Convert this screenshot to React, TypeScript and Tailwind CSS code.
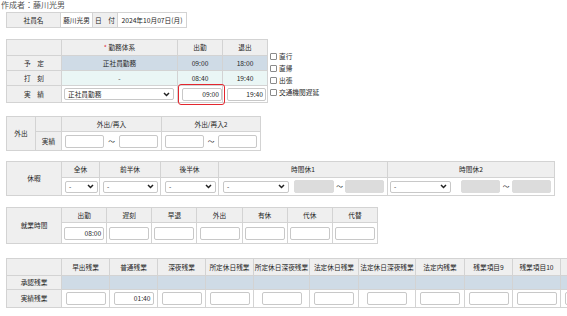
import React from 'react';

const cell = 'border border-[#d3d3d3] p-0 text-center align-middle whitespace-nowrap';
const head = 'border border-[#d3d3d3] p-0 text-center align-middle whitespace-nowrap bg-[#efefef] font-normal';

function Chevron() {
  return (
    <svg width="7" height="5" viewBox="0 0 7 5" className="shrink-0">
      <path d="M1 1 L3.5 3.5 L6 1" fill="none" stroke="#222" strokeWidth="1.5" />
    </svg>
  );
}

function Select({ w, value = '-' }: { w: string; value?: string }) {
  return (
    <div
      className={`${w} flex h-[12px] items-center justify-between rounded-[2px] border border-[#c8c8c8] bg-white pl-[3px] pr-[3px] text-left`}
    >
      <span className="leading-none">{value}</span>
      <Chevron />
    </div>
  );
}

function Field({ w, value = '', gray = false }: { w: string; value?: string; gray?: boolean }) {
  return (
    <div
      className={`${w} h-[13px] rounded-[2px] border pr-[2px] text-right leading-[11px] ${
        gray ? 'border-[#dcdcdc] bg-[#dcdcdc]' : 'border-[#c8c8c8] bg-white'
      }`}
    >
      {value}
    </div>
  );
}

function Check({ label }: { label: string }) {
  return (
    <div className="flex h-[12px] items-center gap-[2px]">
      <span className="h-[7px] w-[7px] rounded-[1px] border border-[#8a8a8a] bg-white" />
      <span>{label}</span>
    </div>
  );
}

const zangyo = [
  { label: '早出残業', w: 'w-[48px]', value: '' },
  { label: '普通残業', w: 'w-[48px]', value: '01:40' },
  { label: '深夜残業', w: 'w-[48px]', value: '' },
  { label: '所定休日残業', w: 'w-[48px]', value: '' },
  { label: '所定休日深夜残業', w: 'w-[56px]', value: '' },
  { label: '法定休日残業', w: 'w-[49px]', value: '' },
  { label: '法定休日深夜残業', w: 'w-[57px]', value: '' },
  { label: '法定内残業', w: 'w-[49px]', value: '' },
  { label: '残業項目9', w: 'w-[48px]', value: '' },
  { label: '残業項目10', w: 'w-[48px]', value: '' },
  { label: '残業項目11', w: 'w-[48px]', value: '' },
];

const shugyo = ['出勤', '遅刻', '早退', '外出', '有休', '代休', '代替'];

export default function App() {
  return (
    <div className="h-[316px] w-[567px] overflow-hidden bg-white font-['Noto_Sans_CJK_JP',sans-serif] text-[6.7px] leading-[9px] text-[#262626]">
      <div className="h-[10px] pl-[1px] text-[8px] leading-[9px] text-[#555]">作成者：藤川光男</div>

      {/* 社員 */}
      <div className="mt-[2px] pl-[6px]">
        <table className="w-[180px] table-fixed border-collapse">
          <colgroup>
            <col className="w-[54px]" />
            <col className="w-[32px]" />
            <col className="w-[25px]" />
            <col className="w-[69px]" />
          </colgroup>
          <tbody>
            <tr className="h-[15px]">
              <td className={head}>社員名</td>
              <td className={cell}>藤川光男</td>
              <td className={head}>日　付</td>
              <td className={cell}>2024年10月07日(月)</td>
            </tr>
          </tbody>
        </table>
      </div>

      {/* 勤務 */}
      <div className="mt-[11px] flex items-start pl-[6px]">
        <table className="w-[261px] table-fixed border-collapse">
          <colgroup>
            <col className="w-[55px]" />
            <col className="w-[116px]" />
            <col className="w-[45px]" />
            <col className="w-[45px]" />
          </colgroup>
          <tbody>
            <tr className="h-[16px]">
              <td className={head} />
              <td className={head}>
                <span className="text-[#e0262b]">*</span> 勤務体系
              </td>
              <td className={head}>出勤</td>
              <td className={head}>退出</td>
            </tr>
            <tr className="h-[15px]">
              <td className={head}>予　定</td>
              <td className={`${cell} bg-[#cfdbe6]`}>正社員勤務</td>
              <td className={`${cell} bg-[#cfdbe6]`}>09:00</td>
              <td className={`${cell} bg-[#cfdbe6]`}>18:00</td>
            </tr>
            <tr className="h-[15px]">
              <td className={head}>打　刻</td>
              <td className={`${cell} bg-[#eaf6f5]`}>-</td>
              <td className={`${cell} bg-[#eaf6f5]`}>08:40</td>
              <td className={`${cell} bg-[#eaf6f5]`}>19:40</td>
            </tr>
            <tr className="h-[17px]">
              <td className={head}>実　績</td>
              <td className={cell}>
                <div className="pl-[2px]">
                  <Select w="w-[110px]" value="正社員勤務" />
                </div>
              </td>
              <td className={cell}>
                <div className="relative pl-[4px]">
                  <Field w="w-[40px]" value="09:00" />
                  <div className="absolute -top-[4px] left-[0px] h-[21px] w-[47px] rounded-[3px] border-[1.5px] border-[#e3262e]" />
                </div>
              </td>
              <td className={cell}>
                <div className="pl-[4px]">
                  <Field w="w-[39px]" value="19:40" />
                </div>
              </td>
            </tr>
          </tbody>
        </table>
        <div className="mt-[11px] pl-[2px]">
          <Check label="直行" />
          <Check label="直帰" />
          <Check label="出張" />
          <Check label="交通機関遅延" />
        </div>
      </div>

      {/* 外出 */}
      <div className="mt-[13px] pl-[6px]">
        <table className="w-[254px] table-fixed border-collapse">
          <colgroup>
            <col className="w-[29px]" />
            <col className="w-[26px]" />
            <col className="w-[100px]" />
            <col className="w-[99px]" />
          </colgroup>
          <tbody>
            <tr className="h-[15px]">
              <td className={head} rowSpan={2}>
                外出
              </td>
              <td className={head} />
              <td className={head}>外出/再入</td>
              <td className={head}>外出/再入2</td>
            </tr>
            <tr className="h-[19px]">
              <td className={head}>実績</td>
              {[0, 1].map((i) => (
                <td key={i} className={cell}>
                  <div className="flex items-center justify-between px-[3px]">
                    <Field w="w-[39px]" />
                    <span>～</span>
                    <Field w="w-[39px]" />
                  </div>
                </td>
              ))}
            </tr>
          </tbody>
        </table>
      </div>

      {/* 休暇 */}
      <div className="mt-[10px] pl-[6px]">
        <table className="w-[548px] table-fixed border-collapse">
          <colgroup>
            <col className="w-[55px]" />
            <col className="w-[38px]" />
            <col className="w-[61px]" />
            <col className="w-[58px]" />
            <col className="w-[169px]" />
            <col className="w-[167px]" />
          </colgroup>
          <tbody>
            <tr className="h-[16px]">
              <td className={head} rowSpan={2}>
                休暇
              </td>
              <td className={head}>全休</td>
              <td className={head}>前半休</td>
              <td className={head}>後半休</td>
              <td className={head}>時間休1</td>
              <td className={head}>時間休2</td>
            </tr>
            <tr className="h-[18px]">
              <td className={cell}>
                <div className="pl-[3px]">
                  <Select w="w-[33px]" />
                </div>
              </td>
              <td className={cell}>
                <div className="pl-[3px]">
                  <Select w="w-[55px]" />
                </div>
              </td>
              <td className={cell}>
                <div className="pl-[4px]">
                  <Select w="w-[51px]" />
                </div>
              </td>
              <td className={cell}>
                <div className="flex items-center pl-[4px]">
                  <Select w="w-[66px]" />
                  <div className="ml-[5px]">
                    <Field w="w-[40px]" gray />
                  </div>
                  <span className="w-[11px] text-center">～</span>
                  <Field w="w-[39px]" gray />
                </div>
              </td>
              <td className={cell}>
                <div className="flex items-center pl-[2px]">
                  <Select w="w-[61px]" />
                  <div className="ml-[10px]">
                    <Field w="w-[39px]" gray />
                  </div>
                  <span className="w-[12px] text-center">～</span>
                  <Field w="w-[39px]" gray />
                </div>
              </td>
            </tr>
          </tbody>
        </table>
      </div>

      {/* 就業時間 */}
      <div className="mt-[11px] pl-[6px]">
        <table className="w-[372px] table-fixed border-collapse">
          <colgroup>
            <col className="w-[55px]" />
            {shugyo.map((s) => (
              <col key={s} className="w-[45px]" />
            ))}
          </colgroup>
          <tbody>
            <tr className="h-[15px]">
              <td className={head} rowSpan={2}>
                就業時間
              </td>
              {shugyo.map((s) => (
                <td key={s} className={head}>
                  {s}
                </td>
              ))}
            </tr>
            <tr className="h-[21px]">
              {shugyo.map((s, i) => (
                <td key={s} className={cell}>
                  <div className="flex justify-center">
                    <Field w="w-[40px]" value={i === 0 ? '08:00' : ''} />
                  </div>
                </td>
              ))}
            </tr>
          </tbody>
        </table>
      </div>

      {/* 残業 */}
      <div className="mt-[14px] pl-[6px]">
        <table className="w-[602px] table-fixed border-collapse">
          <colgroup>
            <col className="w-[55px]" />
            {zangyo.map((z) => (
              <col key={z.label} className={z.w} />
            ))}
          </colgroup>
          <tbody>
            <tr className="h-[17px]">
              <td className={head} />
              {zangyo.map((z) => (
                <td key={z.label} className={head}>
                  {z.label}
                </td>
              ))}
            </tr>
            <tr className="h-[14px]">
              <td className={head}>承認残業</td>
              {zangyo.map((z) => (
                <td key={z.label} className={`${cell} bg-[#cfdbe6]`} />
              ))}
            </tr>
            <tr className="h-[18px]">
              <td className={head}>実績残業</td>
              {zangyo.map((z) => (
                <td key={z.label} className={cell}>
                  <div className="flex justify-center">
                    <Field w="w-[40px]" value={z.value} />
                  </div>
                </td>
              ))}
            </tr>
          </tbody>
        </table>
      </div>
    </div>
  );
}
